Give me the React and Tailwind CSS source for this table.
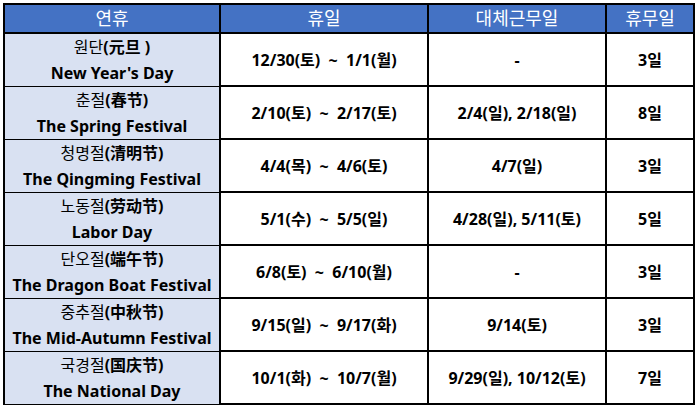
const rows = [
  { ko: "원단", zh: "(元旦 )", en: "New Year's Day", holiday: "12/30(토)  ~  1/1(월)", work: "-", days: "3일" },
  { ko: "춘절", zh: "(春节)", en: "The Spring Festival", holiday: "2/10(토)  ~  2/17(토)", work: "2/4(일), 2/18(일)", days: "8일" },
  { ko: "청명절", zh: "(清明节)", en: "The Qingming Festival", holiday: "4/4(목)  ~  4/6(토)", work: "4/7(일)", days: "3일" },
  { ko: "노동절", zh: "(劳动节)", en: "Labor Day", holiday: "5/1(수)  ~  5/5(일)", work: "4/28(일), 5/11(토)", days: "5일" },
  { ko: "단오절", zh: "(端午节)", en: "The Dragon Boat Festival", holiday: "6/8(토)  ~  6/10(월)", work: "-", days: "3일" },
  { ko: "중추절", zh: "(中秋节)", en: "The Mid-Autumn Festival", holiday: "9/15(일)  ~  9/17(화)", work: "9/14(토)", days: "3일" },
  { ko: "국경절", zh: "(国庆节)", en: "The National Day", holiday: "10/1(화)  ~  10/7(월)", work: "9/29(일), 10/12(토)", days: "7일" },
];

const grid = "grid grid-cols-[216px_208px_178px_86px]";

export default function App() {
  return (
    <div
      className="w-[696px] h-[409px] bg-white pt-[3px] pl-[3px]"
      style={{ fontFamily: '"Noto Sans", "Noto Sans CJK KR", sans-serif' }}
    >
      <div className="w-[692px] border-2 border-black text-black text-[16px]">
        <div className={`${grid} h-[29px] bg-[#4472c4] text-white text-[18px] border-b-2 border-black`}>
          {["연휴", "휴일", "대체근무일", "휴무일"].map((h, i) => (
            <div key={h} className={`flex items-center justify-center ${i < 3 ? "border-r-2 border-black" : ""}`}>{h}</div>
          ))}
        </div>
        {rows.map((r, idx) => {
          const last = idx === rows.length - 1;
          return (
            <div key={r.en} className={`${grid} ${last ? "h-[51px]" : "h-[53px] border-b-2 border-black"}`}>
              <div className="flex flex-col items-center justify-center bg-[#d9e1f2] border-r-2 border-black leading-[26px] whitespace-nowrap">
                <div><span className="font-normal">{r.ko}</span><span className="font-bold">{r.zh}</span></div>
                <div className="font-bold">{r.en}</div>
              </div>
              <div className="flex items-center justify-center font-bold border-r-2 border-black whitespace-pre">{r.holiday}</div>
              <div className="flex items-center justify-center font-bold border-r-2 border-black">{r.work}</div>
              <div className="flex items-center justify-center font-bold">{r.days}</div>
            </div>
          );
        })}
      </div>
    </div>
  );
}
